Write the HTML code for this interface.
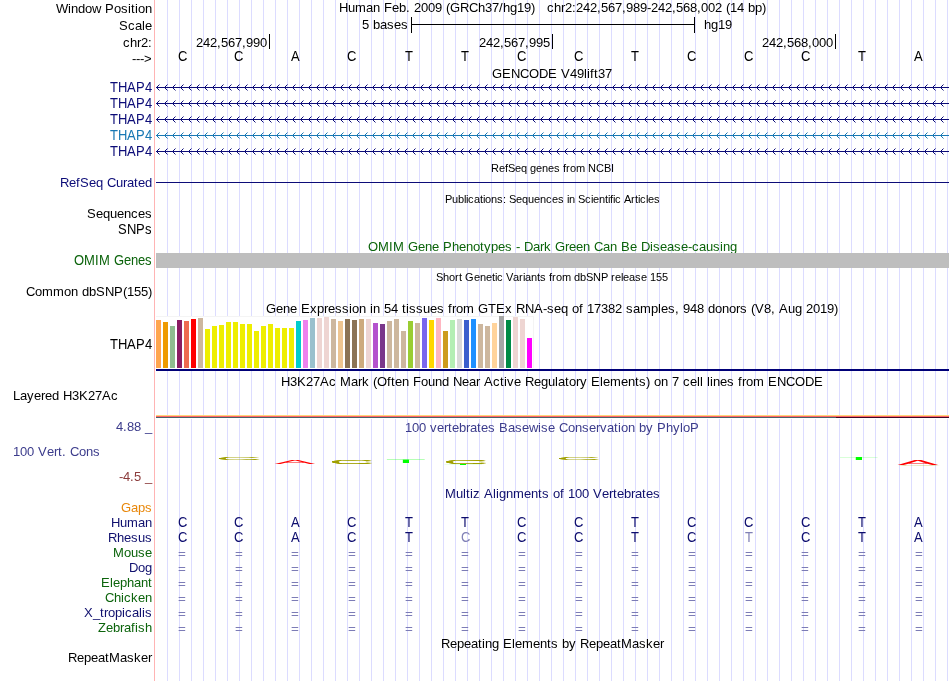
<!DOCTYPE html>
<html lang="en"><head><meta charset="utf-8"><title>UCSC Genome Browser - chr2:242,567,989-242,568,002</title>
<style>
html,body{margin:0;padding:0;background:#fff;}
body{width:950px;height:681px;overflow:hidden;}
svg{display:block;font-family:"Liberation Sans", Arial, Helvetica, sans-serif;will-change:transform;}
text{white-space:pre;}
</style></head><body>
<svg width="950" height="681" viewBox="0 0 950 681" shape-rendering="crispEdges">
<rect x="0" y="0" width="950" height="681" fill="#ffffff"/>
<g fill="#dcdcff"><rect x="167" y="0" width="1" height="681"/><rect x="179" y="0" width="1" height="681"/><rect x="191" y="0" width="1" height="681"/><rect x="203" y="0" width="1" height="681"/><rect x="215" y="0" width="1" height="681"/><rect x="227" y="0" width="1" height="681"/><rect x="239" y="0" width="1" height="681"/><rect x="251" y="0" width="1" height="681"/><rect x="263" y="0" width="1" height="681"/><rect x="275" y="0" width="1" height="681"/><rect x="287" y="0" width="1" height="681"/><rect x="299" y="0" width="1" height="681"/><rect x="311" y="0" width="1" height="681"/><rect x="323" y="0" width="1" height="681"/><rect x="335" y="0" width="1" height="681"/><rect x="347" y="0" width="1" height="681"/><rect x="359" y="0" width="1" height="681"/><rect x="371" y="0" width="1" height="681"/><rect x="383" y="0" width="1" height="681"/><rect x="395" y="0" width="1" height="681"/><rect x="407" y="0" width="1" height="681"/><rect x="419" y="0" width="1" height="681"/><rect x="431" y="0" width="1" height="681"/><rect x="443" y="0" width="1" height="681"/><rect x="455" y="0" width="1" height="681"/><rect x="467" y="0" width="1" height="681"/><rect x="479" y="0" width="1" height="681"/><rect x="491" y="0" width="1" height="681"/><rect x="503" y="0" width="1" height="681"/><rect x="515" y="0" width="1" height="681"/><rect x="527" y="0" width="1" height="681"/><rect x="539" y="0" width="1" height="681"/><rect x="551" y="0" width="1" height="681"/><rect x="563" y="0" width="1" height="681"/><rect x="575" y="0" width="1" height="681"/><rect x="587" y="0" width="1" height="681"/><rect x="599" y="0" width="1" height="681"/><rect x="611" y="0" width="1" height="681"/><rect x="623" y="0" width="1" height="681"/><rect x="635" y="0" width="1" height="681"/><rect x="647" y="0" width="1" height="681"/><rect x="659" y="0" width="1" height="681"/><rect x="671" y="0" width="1" height="681"/><rect x="683" y="0" width="1" height="681"/><rect x="695" y="0" width="1" height="681"/><rect x="707" y="0" width="1" height="681"/><rect x="719" y="0" width="1" height="681"/><rect x="731" y="0" width="1" height="681"/><rect x="743" y="0" width="1" height="681"/><rect x="755" y="0" width="1" height="681"/><rect x="767" y="0" width="1" height="681"/><rect x="779" y="0" width="1" height="681"/><rect x="791" y="0" width="1" height="681"/><rect x="803" y="0" width="1" height="681"/><rect x="815" y="0" width="1" height="681"/><rect x="827" y="0" width="1" height="681"/><rect x="839" y="0" width="1" height="681"/><rect x="851" y="0" width="1" height="681"/><rect x="863" y="0" width="1" height="681"/><rect x="875" y="0" width="1" height="681"/><rect x="887" y="0" width="1" height="681"/><rect x="899" y="0" width="1" height="681"/><rect x="911" y="0" width="1" height="681"/><rect x="923" y="0" width="1" height="681"/><rect x="935" y="0" width="1" height="681"/><rect x="947" y="0" width="1" height="681"/></g>
<rect x="154" y="0" width="1" height="681" fill="#ffb4b4"/>
<rect x="411" y="17" width="1" height="16" fill="#000000"/>
<rect x="694" y="17" width="1" height="16" fill="#000000"/>
<rect x="411" y="24" width="284" height="1" fill="#000000"/>
<rect x="269" y="34" width="1" height="15" fill="#000000"/>
<rect x="552" y="34" width="1" height="15" fill="#000000"/>
<rect x="835" y="34" width="1" height="15" fill="#000000"/>
<rect x="156" y="87" width="793" height="1" fill="#0c0c78"/>
<path d="M159.5 84.5L156.5 87.5L159.5 90.5M167.5 84.5L164.5 87.5L167.5 90.5M175.5 84.5L172.5 87.5L175.5 90.5M183.5 84.5L180.5 87.5L183.5 90.5M191.5 84.5L188.5 87.5L191.5 90.5M199.5 84.5L196.5 87.5L199.5 90.5M207.5 84.5L204.5 87.5L207.5 90.5M215.5 84.5L212.5 87.5L215.5 90.5M223.5 84.5L220.5 87.5L223.5 90.5M231.5 84.5L228.5 87.5L231.5 90.5M239.5 84.5L236.5 87.5L239.5 90.5M247.5 84.5L244.5 87.5L247.5 90.5M255.5 84.5L252.5 87.5L255.5 90.5M263.5 84.5L260.5 87.5L263.5 90.5M271.5 84.5L268.5 87.5L271.5 90.5M279.5 84.5L276.5 87.5L279.5 90.5M287.5 84.5L284.5 87.5L287.5 90.5M295.5 84.5L292.5 87.5L295.5 90.5M303.5 84.5L300.5 87.5L303.5 90.5M311.5 84.5L308.5 87.5L311.5 90.5M319.5 84.5L316.5 87.5L319.5 90.5M327.5 84.5L324.5 87.5L327.5 90.5M335.5 84.5L332.5 87.5L335.5 90.5M343.5 84.5L340.5 87.5L343.5 90.5M351.5 84.5L348.5 87.5L351.5 90.5M359.5 84.5L356.5 87.5L359.5 90.5M367.5 84.5L364.5 87.5L367.5 90.5M375.5 84.5L372.5 87.5L375.5 90.5M383.5 84.5L380.5 87.5L383.5 90.5M391.5 84.5L388.5 87.5L391.5 90.5M399.5 84.5L396.5 87.5L399.5 90.5M407.5 84.5L404.5 87.5L407.5 90.5M415.5 84.5L412.5 87.5L415.5 90.5M423.5 84.5L420.5 87.5L423.5 90.5M431.5 84.5L428.5 87.5L431.5 90.5M439.5 84.5L436.5 87.5L439.5 90.5M447.5 84.5L444.5 87.5L447.5 90.5M455.5 84.5L452.5 87.5L455.5 90.5M463.5 84.5L460.5 87.5L463.5 90.5M471.5 84.5L468.5 87.5L471.5 90.5M479.5 84.5L476.5 87.5L479.5 90.5M487.5 84.5L484.5 87.5L487.5 90.5M495.5 84.5L492.5 87.5L495.5 90.5M503.5 84.5L500.5 87.5L503.5 90.5M511.5 84.5L508.5 87.5L511.5 90.5M519.5 84.5L516.5 87.5L519.5 90.5M527.5 84.5L524.5 87.5L527.5 90.5M535.5 84.5L532.5 87.5L535.5 90.5M543.5 84.5L540.5 87.5L543.5 90.5M551.5 84.5L548.5 87.5L551.5 90.5M559.5 84.5L556.5 87.5L559.5 90.5M567.5 84.5L564.5 87.5L567.5 90.5M575.5 84.5L572.5 87.5L575.5 90.5M583.5 84.5L580.5 87.5L583.5 90.5M591.5 84.5L588.5 87.5L591.5 90.5M599.5 84.5L596.5 87.5L599.5 90.5M607.5 84.5L604.5 87.5L607.5 90.5M615.5 84.5L612.5 87.5L615.5 90.5M623.5 84.5L620.5 87.5L623.5 90.5M631.5 84.5L628.5 87.5L631.5 90.5M639.5 84.5L636.5 87.5L639.5 90.5M647.5 84.5L644.5 87.5L647.5 90.5M655.5 84.5L652.5 87.5L655.5 90.5M663.5 84.5L660.5 87.5L663.5 90.5M671.5 84.5L668.5 87.5L671.5 90.5M679.5 84.5L676.5 87.5L679.5 90.5M687.5 84.5L684.5 87.5L687.5 90.5M695.5 84.5L692.5 87.5L695.5 90.5M703.5 84.5L700.5 87.5L703.5 90.5M711.5 84.5L708.5 87.5L711.5 90.5M719.5 84.5L716.5 87.5L719.5 90.5M727.5 84.5L724.5 87.5L727.5 90.5M735.5 84.5L732.5 87.5L735.5 90.5M743.5 84.5L740.5 87.5L743.5 90.5M751.5 84.5L748.5 87.5L751.5 90.5M759.5 84.5L756.5 87.5L759.5 90.5M767.5 84.5L764.5 87.5L767.5 90.5M775.5 84.5L772.5 87.5L775.5 90.5M783.5 84.5L780.5 87.5L783.5 90.5M791.5 84.5L788.5 87.5L791.5 90.5M799.5 84.5L796.5 87.5L799.5 90.5M807.5 84.5L804.5 87.5L807.5 90.5M815.5 84.5L812.5 87.5L815.5 90.5M823.5 84.5L820.5 87.5L823.5 90.5M831.5 84.5L828.5 87.5L831.5 90.5M839.5 84.5L836.5 87.5L839.5 90.5M847.5 84.5L844.5 87.5L847.5 90.5M855.5 84.5L852.5 87.5L855.5 90.5M863.5 84.5L860.5 87.5L863.5 90.5M871.5 84.5L868.5 87.5L871.5 90.5M879.5 84.5L876.5 87.5L879.5 90.5M887.5 84.5L884.5 87.5L887.5 90.5M895.5 84.5L892.5 87.5L895.5 90.5M903.5 84.5L900.5 87.5L903.5 90.5M911.5 84.5L908.5 87.5L911.5 90.5M919.5 84.5L916.5 87.5L919.5 90.5M927.5 84.5L924.5 87.5L927.5 90.5M935.5 84.5L932.5 87.5L935.5 90.5M943.5 84.5L940.5 87.5L943.5 90.5" stroke="#0c0c78" stroke-width="1" fill="none" shape-rendering="geometricPrecision"/>
<rect x="156" y="103" width="793" height="1" fill="#0c0c78"/>
<path d="M159.5 100.5L156.5 103.5L159.5 106.5M167.5 100.5L164.5 103.5L167.5 106.5M175.5 100.5L172.5 103.5L175.5 106.5M183.5 100.5L180.5 103.5L183.5 106.5M191.5 100.5L188.5 103.5L191.5 106.5M199.5 100.5L196.5 103.5L199.5 106.5M207.5 100.5L204.5 103.5L207.5 106.5M215.5 100.5L212.5 103.5L215.5 106.5M223.5 100.5L220.5 103.5L223.5 106.5M231.5 100.5L228.5 103.5L231.5 106.5M239.5 100.5L236.5 103.5L239.5 106.5M247.5 100.5L244.5 103.5L247.5 106.5M255.5 100.5L252.5 103.5L255.5 106.5M263.5 100.5L260.5 103.5L263.5 106.5M271.5 100.5L268.5 103.5L271.5 106.5M279.5 100.5L276.5 103.5L279.5 106.5M287.5 100.5L284.5 103.5L287.5 106.5M295.5 100.5L292.5 103.5L295.5 106.5M303.5 100.5L300.5 103.5L303.5 106.5M311.5 100.5L308.5 103.5L311.5 106.5M319.5 100.5L316.5 103.5L319.5 106.5M327.5 100.5L324.5 103.5L327.5 106.5M335.5 100.5L332.5 103.5L335.5 106.5M343.5 100.5L340.5 103.5L343.5 106.5M351.5 100.5L348.5 103.5L351.5 106.5M359.5 100.5L356.5 103.5L359.5 106.5M367.5 100.5L364.5 103.5L367.5 106.5M375.5 100.5L372.5 103.5L375.5 106.5M383.5 100.5L380.5 103.5L383.5 106.5M391.5 100.5L388.5 103.5L391.5 106.5M399.5 100.5L396.5 103.5L399.5 106.5M407.5 100.5L404.5 103.5L407.5 106.5M415.5 100.5L412.5 103.5L415.5 106.5M423.5 100.5L420.5 103.5L423.5 106.5M431.5 100.5L428.5 103.5L431.5 106.5M439.5 100.5L436.5 103.5L439.5 106.5M447.5 100.5L444.5 103.5L447.5 106.5M455.5 100.5L452.5 103.5L455.5 106.5M463.5 100.5L460.5 103.5L463.5 106.5M471.5 100.5L468.5 103.5L471.5 106.5M479.5 100.5L476.5 103.5L479.5 106.5M487.5 100.5L484.5 103.5L487.5 106.5M495.5 100.5L492.5 103.5L495.5 106.5M503.5 100.5L500.5 103.5L503.5 106.5M511.5 100.5L508.5 103.5L511.5 106.5M519.5 100.5L516.5 103.5L519.5 106.5M527.5 100.5L524.5 103.5L527.5 106.5M535.5 100.5L532.5 103.5L535.5 106.5M543.5 100.5L540.5 103.5L543.5 106.5M551.5 100.5L548.5 103.5L551.5 106.5M559.5 100.5L556.5 103.5L559.5 106.5M567.5 100.5L564.5 103.5L567.5 106.5M575.5 100.5L572.5 103.5L575.5 106.5M583.5 100.5L580.5 103.5L583.5 106.5M591.5 100.5L588.5 103.5L591.5 106.5M599.5 100.5L596.5 103.5L599.5 106.5M607.5 100.5L604.5 103.5L607.5 106.5M615.5 100.5L612.5 103.5L615.5 106.5M623.5 100.5L620.5 103.5L623.5 106.5M631.5 100.5L628.5 103.5L631.5 106.5M639.5 100.5L636.5 103.5L639.5 106.5M647.5 100.5L644.5 103.5L647.5 106.5M655.5 100.5L652.5 103.5L655.5 106.5M663.5 100.5L660.5 103.5L663.5 106.5M671.5 100.5L668.5 103.5L671.5 106.5M679.5 100.5L676.5 103.5L679.5 106.5M687.5 100.5L684.5 103.5L687.5 106.5M695.5 100.5L692.5 103.5L695.5 106.5M703.5 100.5L700.5 103.5L703.5 106.5M711.5 100.5L708.5 103.5L711.5 106.5M719.5 100.5L716.5 103.5L719.5 106.5M727.5 100.5L724.5 103.5L727.5 106.5M735.5 100.5L732.5 103.5L735.5 106.5M743.5 100.5L740.5 103.5L743.5 106.5M751.5 100.5L748.5 103.5L751.5 106.5M759.5 100.5L756.5 103.5L759.5 106.5M767.5 100.5L764.5 103.5L767.5 106.5M775.5 100.5L772.5 103.5L775.5 106.5M783.5 100.5L780.5 103.5L783.5 106.5M791.5 100.5L788.5 103.5L791.5 106.5M799.5 100.5L796.5 103.5L799.5 106.5M807.5 100.5L804.5 103.5L807.5 106.5M815.5 100.5L812.5 103.5L815.5 106.5M823.5 100.5L820.5 103.5L823.5 106.5M831.5 100.5L828.5 103.5L831.5 106.5M839.5 100.5L836.5 103.5L839.5 106.5M847.5 100.5L844.5 103.5L847.5 106.5M855.5 100.5L852.5 103.5L855.5 106.5M863.5 100.5L860.5 103.5L863.5 106.5M871.5 100.5L868.5 103.5L871.5 106.5M879.5 100.5L876.5 103.5L879.5 106.5M887.5 100.5L884.5 103.5L887.5 106.5M895.5 100.5L892.5 103.5L895.5 106.5M903.5 100.5L900.5 103.5L903.5 106.5M911.5 100.5L908.5 103.5L911.5 106.5M919.5 100.5L916.5 103.5L919.5 106.5M927.5 100.5L924.5 103.5L927.5 106.5M935.5 100.5L932.5 103.5L935.5 106.5M943.5 100.5L940.5 103.5L943.5 106.5" stroke="#0c0c78" stroke-width="1" fill="none" shape-rendering="geometricPrecision"/>
<rect x="156" y="119" width="793" height="1" fill="#0c0c78"/>
<path d="M159.5 116.5L156.5 119.5L159.5 122.5M167.5 116.5L164.5 119.5L167.5 122.5M175.5 116.5L172.5 119.5L175.5 122.5M183.5 116.5L180.5 119.5L183.5 122.5M191.5 116.5L188.5 119.5L191.5 122.5M199.5 116.5L196.5 119.5L199.5 122.5M207.5 116.5L204.5 119.5L207.5 122.5M215.5 116.5L212.5 119.5L215.5 122.5M223.5 116.5L220.5 119.5L223.5 122.5M231.5 116.5L228.5 119.5L231.5 122.5M239.5 116.5L236.5 119.5L239.5 122.5M247.5 116.5L244.5 119.5L247.5 122.5M255.5 116.5L252.5 119.5L255.5 122.5M263.5 116.5L260.5 119.5L263.5 122.5M271.5 116.5L268.5 119.5L271.5 122.5M279.5 116.5L276.5 119.5L279.5 122.5M287.5 116.5L284.5 119.5L287.5 122.5M295.5 116.5L292.5 119.5L295.5 122.5M303.5 116.5L300.5 119.5L303.5 122.5M311.5 116.5L308.5 119.5L311.5 122.5M319.5 116.5L316.5 119.5L319.5 122.5M327.5 116.5L324.5 119.5L327.5 122.5M335.5 116.5L332.5 119.5L335.5 122.5M343.5 116.5L340.5 119.5L343.5 122.5M351.5 116.5L348.5 119.5L351.5 122.5M359.5 116.5L356.5 119.5L359.5 122.5M367.5 116.5L364.5 119.5L367.5 122.5M375.5 116.5L372.5 119.5L375.5 122.5M383.5 116.5L380.5 119.5L383.5 122.5M391.5 116.5L388.5 119.5L391.5 122.5M399.5 116.5L396.5 119.5L399.5 122.5M407.5 116.5L404.5 119.5L407.5 122.5M415.5 116.5L412.5 119.5L415.5 122.5M423.5 116.5L420.5 119.5L423.5 122.5M431.5 116.5L428.5 119.5L431.5 122.5M439.5 116.5L436.5 119.5L439.5 122.5M447.5 116.5L444.5 119.5L447.5 122.5M455.5 116.5L452.5 119.5L455.5 122.5M463.5 116.5L460.5 119.5L463.5 122.5M471.5 116.5L468.5 119.5L471.5 122.5M479.5 116.5L476.5 119.5L479.5 122.5M487.5 116.5L484.5 119.5L487.5 122.5M495.5 116.5L492.5 119.5L495.5 122.5M503.5 116.5L500.5 119.5L503.5 122.5M511.5 116.5L508.5 119.5L511.5 122.5M519.5 116.5L516.5 119.5L519.5 122.5M527.5 116.5L524.5 119.5L527.5 122.5M535.5 116.5L532.5 119.5L535.5 122.5M543.5 116.5L540.5 119.5L543.5 122.5M551.5 116.5L548.5 119.5L551.5 122.5M559.5 116.5L556.5 119.5L559.5 122.5M567.5 116.5L564.5 119.5L567.5 122.5M575.5 116.5L572.5 119.5L575.5 122.5M583.5 116.5L580.5 119.5L583.5 122.5M591.5 116.5L588.5 119.5L591.5 122.5M599.5 116.5L596.5 119.5L599.5 122.5M607.5 116.5L604.5 119.5L607.5 122.5M615.5 116.5L612.5 119.5L615.5 122.5M623.5 116.5L620.5 119.5L623.5 122.5M631.5 116.5L628.5 119.5L631.5 122.5M639.5 116.5L636.5 119.5L639.5 122.5M647.5 116.5L644.5 119.5L647.5 122.5M655.5 116.5L652.5 119.5L655.5 122.5M663.5 116.5L660.5 119.5L663.5 122.5M671.5 116.5L668.5 119.5L671.5 122.5M679.5 116.5L676.5 119.5L679.5 122.5M687.5 116.5L684.5 119.5L687.5 122.5M695.5 116.5L692.5 119.5L695.5 122.5M703.5 116.5L700.5 119.5L703.5 122.5M711.5 116.5L708.5 119.5L711.5 122.5M719.5 116.5L716.5 119.5L719.5 122.5M727.5 116.5L724.5 119.5L727.5 122.5M735.5 116.5L732.5 119.5L735.5 122.5M743.5 116.5L740.5 119.5L743.5 122.5M751.5 116.5L748.5 119.5L751.5 122.5M759.5 116.5L756.5 119.5L759.5 122.5M767.5 116.5L764.5 119.5L767.5 122.5M775.5 116.5L772.5 119.5L775.5 122.5M783.5 116.5L780.5 119.5L783.5 122.5M791.5 116.5L788.5 119.5L791.5 122.5M799.5 116.5L796.5 119.5L799.5 122.5M807.5 116.5L804.5 119.5L807.5 122.5M815.5 116.5L812.5 119.5L815.5 122.5M823.5 116.5L820.5 119.5L823.5 122.5M831.5 116.5L828.5 119.5L831.5 122.5M839.5 116.5L836.5 119.5L839.5 122.5M847.5 116.5L844.5 119.5L847.5 122.5M855.5 116.5L852.5 119.5L855.5 122.5M863.5 116.5L860.5 119.5L863.5 122.5M871.5 116.5L868.5 119.5L871.5 122.5M879.5 116.5L876.5 119.5L879.5 122.5M887.5 116.5L884.5 119.5L887.5 122.5M895.5 116.5L892.5 119.5L895.5 122.5M903.5 116.5L900.5 119.5L903.5 122.5M911.5 116.5L908.5 119.5L911.5 122.5M919.5 116.5L916.5 119.5L919.5 122.5M927.5 116.5L924.5 119.5L927.5 122.5M935.5 116.5L932.5 119.5L935.5 122.5M943.5 116.5L940.5 119.5L943.5 122.5" stroke="#0c0c78" stroke-width="1" fill="none" shape-rendering="geometricPrecision"/>
<rect x="156" y="135" width="793" height="1" fill="#1878b4"/>
<path d="M159.5 132.5L156.5 135.5L159.5 138.5M167.5 132.5L164.5 135.5L167.5 138.5M175.5 132.5L172.5 135.5L175.5 138.5M183.5 132.5L180.5 135.5L183.5 138.5M191.5 132.5L188.5 135.5L191.5 138.5M199.5 132.5L196.5 135.5L199.5 138.5M207.5 132.5L204.5 135.5L207.5 138.5M215.5 132.5L212.5 135.5L215.5 138.5M223.5 132.5L220.5 135.5L223.5 138.5M231.5 132.5L228.5 135.5L231.5 138.5M239.5 132.5L236.5 135.5L239.5 138.5M247.5 132.5L244.5 135.5L247.5 138.5M255.5 132.5L252.5 135.5L255.5 138.5M263.5 132.5L260.5 135.5L263.5 138.5M271.5 132.5L268.5 135.5L271.5 138.5M279.5 132.5L276.5 135.5L279.5 138.5M287.5 132.5L284.5 135.5L287.5 138.5M295.5 132.5L292.5 135.5L295.5 138.5M303.5 132.5L300.5 135.5L303.5 138.5M311.5 132.5L308.5 135.5L311.5 138.5M319.5 132.5L316.5 135.5L319.5 138.5M327.5 132.5L324.5 135.5L327.5 138.5M335.5 132.5L332.5 135.5L335.5 138.5M343.5 132.5L340.5 135.5L343.5 138.5M351.5 132.5L348.5 135.5L351.5 138.5M359.5 132.5L356.5 135.5L359.5 138.5M367.5 132.5L364.5 135.5L367.5 138.5M375.5 132.5L372.5 135.5L375.5 138.5M383.5 132.5L380.5 135.5L383.5 138.5M391.5 132.5L388.5 135.5L391.5 138.5M399.5 132.5L396.5 135.5L399.5 138.5M407.5 132.5L404.5 135.5L407.5 138.5M415.5 132.5L412.5 135.5L415.5 138.5M423.5 132.5L420.5 135.5L423.5 138.5M431.5 132.5L428.5 135.5L431.5 138.5M439.5 132.5L436.5 135.5L439.5 138.5M447.5 132.5L444.5 135.5L447.5 138.5M455.5 132.5L452.5 135.5L455.5 138.5M463.5 132.5L460.5 135.5L463.5 138.5M471.5 132.5L468.5 135.5L471.5 138.5M479.5 132.5L476.5 135.5L479.5 138.5M487.5 132.5L484.5 135.5L487.5 138.5M495.5 132.5L492.5 135.5L495.5 138.5M503.5 132.5L500.5 135.5L503.5 138.5M511.5 132.5L508.5 135.5L511.5 138.5M519.5 132.5L516.5 135.5L519.5 138.5M527.5 132.5L524.5 135.5L527.5 138.5M535.5 132.5L532.5 135.5L535.5 138.5M543.5 132.5L540.5 135.5L543.5 138.5M551.5 132.5L548.5 135.5L551.5 138.5M559.5 132.5L556.5 135.5L559.5 138.5M567.5 132.5L564.5 135.5L567.5 138.5M575.5 132.5L572.5 135.5L575.5 138.5M583.5 132.5L580.5 135.5L583.5 138.5M591.5 132.5L588.5 135.5L591.5 138.5M599.5 132.5L596.5 135.5L599.5 138.5M607.5 132.5L604.5 135.5L607.5 138.5M615.5 132.5L612.5 135.5L615.5 138.5M623.5 132.5L620.5 135.5L623.5 138.5M631.5 132.5L628.5 135.5L631.5 138.5M639.5 132.5L636.5 135.5L639.5 138.5M647.5 132.5L644.5 135.5L647.5 138.5M655.5 132.5L652.5 135.5L655.5 138.5M663.5 132.5L660.5 135.5L663.5 138.5M671.5 132.5L668.5 135.5L671.5 138.5M679.5 132.5L676.5 135.5L679.5 138.5M687.5 132.5L684.5 135.5L687.5 138.5M695.5 132.5L692.5 135.5L695.5 138.5M703.5 132.5L700.5 135.5L703.5 138.5M711.5 132.5L708.5 135.5L711.5 138.5M719.5 132.5L716.5 135.5L719.5 138.5M727.5 132.5L724.5 135.5L727.5 138.5M735.5 132.5L732.5 135.5L735.5 138.5M743.5 132.5L740.5 135.5L743.5 138.5M751.5 132.5L748.5 135.5L751.5 138.5M759.5 132.5L756.5 135.5L759.5 138.5M767.5 132.5L764.5 135.5L767.5 138.5M775.5 132.5L772.5 135.5L775.5 138.5M783.5 132.5L780.5 135.5L783.5 138.5M791.5 132.5L788.5 135.5L791.5 138.5M799.5 132.5L796.5 135.5L799.5 138.5M807.5 132.5L804.5 135.5L807.5 138.5M815.5 132.5L812.5 135.5L815.5 138.5M823.5 132.5L820.5 135.5L823.5 138.5M831.5 132.5L828.5 135.5L831.5 138.5M839.5 132.5L836.5 135.5L839.5 138.5M847.5 132.5L844.5 135.5L847.5 138.5M855.5 132.5L852.5 135.5L855.5 138.5M863.5 132.5L860.5 135.5L863.5 138.5M871.5 132.5L868.5 135.5L871.5 138.5M879.5 132.5L876.5 135.5L879.5 138.5M887.5 132.5L884.5 135.5L887.5 138.5M895.5 132.5L892.5 135.5L895.5 138.5M903.5 132.5L900.5 135.5L903.5 138.5M911.5 132.5L908.5 135.5L911.5 138.5M919.5 132.5L916.5 135.5L919.5 138.5M927.5 132.5L924.5 135.5L927.5 138.5M935.5 132.5L932.5 135.5L935.5 138.5M943.5 132.5L940.5 135.5L943.5 138.5" stroke="#1878b4" stroke-width="1" fill="none" shape-rendering="geometricPrecision"/>
<rect x="156" y="151" width="793" height="1" fill="#0c0c78"/>
<path d="M159.5 148.5L156.5 151.5L159.5 154.5M167.5 148.5L164.5 151.5L167.5 154.5M175.5 148.5L172.5 151.5L175.5 154.5M183.5 148.5L180.5 151.5L183.5 154.5M191.5 148.5L188.5 151.5L191.5 154.5M199.5 148.5L196.5 151.5L199.5 154.5M207.5 148.5L204.5 151.5L207.5 154.5M215.5 148.5L212.5 151.5L215.5 154.5M223.5 148.5L220.5 151.5L223.5 154.5M231.5 148.5L228.5 151.5L231.5 154.5M239.5 148.5L236.5 151.5L239.5 154.5M247.5 148.5L244.5 151.5L247.5 154.5M255.5 148.5L252.5 151.5L255.5 154.5M263.5 148.5L260.5 151.5L263.5 154.5M271.5 148.5L268.5 151.5L271.5 154.5M279.5 148.5L276.5 151.5L279.5 154.5M287.5 148.5L284.5 151.5L287.5 154.5M295.5 148.5L292.5 151.5L295.5 154.5M303.5 148.5L300.5 151.5L303.5 154.5M311.5 148.5L308.5 151.5L311.5 154.5M319.5 148.5L316.5 151.5L319.5 154.5M327.5 148.5L324.5 151.5L327.5 154.5M335.5 148.5L332.5 151.5L335.5 154.5M343.5 148.5L340.5 151.5L343.5 154.5M351.5 148.5L348.5 151.5L351.5 154.5M359.5 148.5L356.5 151.5L359.5 154.5M367.5 148.5L364.5 151.5L367.5 154.5M375.5 148.5L372.5 151.5L375.5 154.5M383.5 148.5L380.5 151.5L383.5 154.5M391.5 148.5L388.5 151.5L391.5 154.5M399.5 148.5L396.5 151.5L399.5 154.5M407.5 148.5L404.5 151.5L407.5 154.5M415.5 148.5L412.5 151.5L415.5 154.5M423.5 148.5L420.5 151.5L423.5 154.5M431.5 148.5L428.5 151.5L431.5 154.5M439.5 148.5L436.5 151.5L439.5 154.5M447.5 148.5L444.5 151.5L447.5 154.5M455.5 148.5L452.5 151.5L455.5 154.5M463.5 148.5L460.5 151.5L463.5 154.5M471.5 148.5L468.5 151.5L471.5 154.5M479.5 148.5L476.5 151.5L479.5 154.5M487.5 148.5L484.5 151.5L487.5 154.5M495.5 148.5L492.5 151.5L495.5 154.5M503.5 148.5L500.5 151.5L503.5 154.5M511.5 148.5L508.5 151.5L511.5 154.5M519.5 148.5L516.5 151.5L519.5 154.5M527.5 148.5L524.5 151.5L527.5 154.5M535.5 148.5L532.5 151.5L535.5 154.5M543.5 148.5L540.5 151.5L543.5 154.5M551.5 148.5L548.5 151.5L551.5 154.5M559.5 148.5L556.5 151.5L559.5 154.5M567.5 148.5L564.5 151.5L567.5 154.5M575.5 148.5L572.5 151.5L575.5 154.5M583.5 148.5L580.5 151.5L583.5 154.5M591.5 148.5L588.5 151.5L591.5 154.5M599.5 148.5L596.5 151.5L599.5 154.5M607.5 148.5L604.5 151.5L607.5 154.5M615.5 148.5L612.5 151.5L615.5 154.5M623.5 148.5L620.5 151.5L623.5 154.5M631.5 148.5L628.5 151.5L631.5 154.5M639.5 148.5L636.5 151.5L639.5 154.5M647.5 148.5L644.5 151.5L647.5 154.5M655.5 148.5L652.5 151.5L655.5 154.5M663.5 148.5L660.5 151.5L663.5 154.5M671.5 148.5L668.5 151.5L671.5 154.5M679.5 148.5L676.5 151.5L679.5 154.5M687.5 148.5L684.5 151.5L687.5 154.5M695.5 148.5L692.5 151.5L695.5 154.5M703.5 148.5L700.5 151.5L703.5 154.5M711.5 148.5L708.5 151.5L711.5 154.5M719.5 148.5L716.5 151.5L719.5 154.5M727.5 148.5L724.5 151.5L727.5 154.5M735.5 148.5L732.5 151.5L735.5 154.5M743.5 148.5L740.5 151.5L743.5 154.5M751.5 148.5L748.5 151.5L751.5 154.5M759.5 148.5L756.5 151.5L759.5 154.5M767.5 148.5L764.5 151.5L767.5 154.5M775.5 148.5L772.5 151.5L775.5 154.5M783.5 148.5L780.5 151.5L783.5 154.5M791.5 148.5L788.5 151.5L791.5 154.5M799.5 148.5L796.5 151.5L799.5 154.5M807.5 148.5L804.5 151.5L807.5 154.5M815.5 148.5L812.5 151.5L815.5 154.5M823.5 148.5L820.5 151.5L823.5 154.5M831.5 148.5L828.5 151.5L831.5 154.5M839.5 148.5L836.5 151.5L839.5 154.5M847.5 148.5L844.5 151.5L847.5 154.5M855.5 148.5L852.5 151.5L855.5 154.5M863.5 148.5L860.5 151.5L863.5 154.5M871.5 148.5L868.5 151.5L871.5 154.5M879.5 148.5L876.5 151.5L879.5 154.5M887.5 148.5L884.5 151.5L887.5 154.5M895.5 148.5L892.5 151.5L895.5 154.5M903.5 148.5L900.5 151.5L903.5 154.5M911.5 148.5L908.5 151.5L911.5 154.5M919.5 148.5L916.5 151.5L919.5 154.5M927.5 148.5L924.5 151.5L927.5 154.5M935.5 148.5L932.5 151.5L935.5 154.5M943.5 148.5L940.5 151.5L943.5 154.5" stroke="#0c0c78" stroke-width="1" fill="none" shape-rendering="geometricPrecision"/>
<rect x="156" y="182" width="793" height="1" fill="#0c0c78"/>
<rect x="156" y="415" width="793" height="1" fill="#ffd67a"/>
<rect x="156" y="416" width="793" height="1" fill="#ff6464"/>
<rect x="156" y="417" width="680" height="1" fill="#46646a"/>
<rect x="836" y="417" width="113" height="1" fill="#3c0a28"/>
<rect x="156" y="418" width="793" height="1" fill="#ffffff"/>
<text x="56 68 71 78 85 92 101 105 114 121 128 131 135 138 145" y="13" font-size="13">Window Position</text>
<text x="119 128 135 142 145" y="30" font-size="13">Scale</text>
<text x="123 130 137 141 148" y="47" font-size="13">chr2:</text>
<text x="132 136 140 144" y="63" font-size="13">---&gt;</text>
<text x="339 348 355 366 373 380 384 392 399 406 410 414 421 428 435 442 446 450 460 469 478 485 492 499 503 510 517 524 531 535 539 543 547 554 561 565 572 576 583 590 597 601 608 615 622 626 633 640 647 651 658 665 672 676 683 690 697 701 708 715 722 726 730 737 744 748 755 762" y="12" font-size="13">Human Feb. 2009 (GRCh37/hg19)   chr2:242,567,989-242,568,002 (14 bp)</text>
<text x="362 369 373 380 387 394 401" y="29" font-size="13">5 bases</text>
<text x="704 711 718 725" y="29" font-size="13">hg19</text>
<text x="196 203 210 217 221 228 235 242 246 253 260" y="47" font-size="13">242,567,990</text>
<text x="479 486 493 500 504 511 518 525 529 536 543" y="47" font-size="13">242,567,995</text>
<text x="762 769 776 783 787 794 801 808 812 819 826" y="47" font-size="13">242,568,000</text>
<text transform="matrix(1 0 0 1.07 0 61)" x="178.1" y="0" font-size="13">C</text>
<text transform="matrix(1 0 0 1.07 0 61)" x="234.1" y="0" font-size="13">C</text>
<text transform="matrix(1 0 0 1.07 0 61)" x="291" y="0" font-size="13">A</text>
<text transform="matrix(1 0 0 1.07 0 61)" x="347.1" y="0" font-size="13">C</text>
<text transform="matrix(1 0 0 1.07 0 61)" x="405" y="0" font-size="13">T</text>
<text transform="matrix(1 0 0 1.07 0 61)" x="461" y="0" font-size="13">T</text>
<text transform="matrix(1 0 0 1.07 0 61)" x="517.1" y="0" font-size="13">C</text>
<text transform="matrix(1 0 0 1.07 0 61)" x="574.1" y="0" font-size="13">C</text>
<text transform="matrix(1 0 0 1.07 0 61)" x="631" y="0" font-size="13">T</text>
<text transform="matrix(1 0 0 1.07 0 61)" x="687.1" y="0" font-size="13">C</text>
<text transform="matrix(1 0 0 1.07 0 61)" x="744.1" y="0" font-size="13">C</text>
<text transform="matrix(1 0 0 1.07 0 61)" x="801.1" y="0" font-size="13">C</text>
<text transform="matrix(1 0 0 1.07 0 61)" x="858" y="0" font-size="13">T</text>
<text transform="matrix(1 0 0 1.07 0 61)" x="914" y="0" font-size="13">A</text>
<text x="492 502 511 520 529 539 548 557 561 570 577 584 587 590 594 598 605" y="78" font-size="13">GENCODE V49lift37</text>
<text transform="matrix(1 0 0 1.07 0 92)" x="110 118 127 136 145" y="0" font-size="13" fill="#0c0c78">THAP4</text>
<text transform="matrix(1 0 0 1.07 0 108)" x="110 118 127 136 145" y="0" font-size="13" fill="#0c0c78">THAP4</text>
<text transform="matrix(1 0 0 1.07 0 124)" x="110 118 127 136 145" y="0" font-size="13" fill="#0c0c78">THAP4</text>
<text transform="matrix(1 0 0 1.07 0 140)" x="110 118 127 136 145" y="0" font-size="13" fill="#1878b4">THAP4</text>
<text transform="matrix(1 0 0 1.07 0 156)" x="110 118 127 136 145" y="0" font-size="13" fill="#0c0c78">THAP4</text>
<text x="491 499 505 508 515 521 527 530 536 542 548 554 560 563 566 570 576 585 588 596 604 611" y="172" font-size="11">RefSeq genes from NCBI</text>
<text x="60 69 76 80 89 96 103 107 116 123 127 134 138 145" y="187" font-size="13" fill="#0c0c78">RefSeq Curated</text>
<text x="445 452 458 464 466 468 474 480 483 485 491 497 503 506 509 516 522 528 534 540 546 552 558 564 567 569 575 578 585 591 593 599 605 608 610 613 615 621 624 631 635 638 640 646 648 654" y="203" font-size="11">Publications: Sequences in Scientific Articles</text>
<text x="87 96 103 110 117 124 131 138 145" y="218" font-size="13">Sequences</text>
<text transform="matrix(1 0 0 1.07 0 234)" x="118 127 136 145" y="0" font-size="13">SNPs</text>
<text x="368 378 389 393 404 408 418 425 432 439 443 452 459 466 473 480 484 491 498 505 512 516 520 524 533 540 544 551 555 565 569 576 583 590 594 603 610 617 621 630 637 641 650 653 660 667 674 681 688 692 699 706 713 720 723 730" y="251" font-size="13" fill="#0c640c">OMIM Gene Phenotypes - Dark Green Can Be Disease-causing</text>
<text transform="matrix(1 0 0 1.07 0 265)" x="74 84 95 99 110 114 124 131 138 145" y="0" font-size="13" fill="#0c640c">OMIM Genes</text>
<text x="436 443 449 455 459 462 465 474 480 486 492 495 497 503 506 513 519 523 525 531 537 540 546 549 552 556 562 571 574 580 586 593 601 608 611 615 621 623 629 635 641 647 650 656 662" y="281" font-size="11">Short Genetic Variants from dbSNP release 155</text>
<text x="26 35 42 53 64 71 78 82 89 96 105 114 123 127 134 141 148" y="296" font-size="13">Common dbSNP(155)</text>
<text x="266 276 283 290 297 301 310 317 324 328 335 342 349 352 359 366 370 373 380 384 391 398 402 406 409 416 423 430 437 444 448 452 456 463 474 478 488 496 505 512 516 525 534 543 547 554 561 568 572 579 583 587 594 601 608 615 622 626 633 640 651 658 661 668 675 679 683 690 697 704 708 715 722 729 736 740 747 751 755 764 771 775 779 788 795 802 806 813 820 827 834" y="313" font-size="13">Gene Expression in 54 tissues from GTEx RNA-seq of 17382 samples, 948 donors (V8, Aug 2019)</text>
<text transform="matrix(1 0 0 1.07 0 349)" x="110 118 127 136 145" y="0" font-size="13">THAP4</text>
<text x="281 290 297 306 313 320 329 336 340 351 358 362 369 373 377 387 391 395 402 409 413 421 428 435 442 449 453 462 469 476 480 484 493 500 504 507 514 521 525 534 541 548 555 558 565 569 576 580 587 591 600 603 610 621 628 635 639 646 650 654 661 668 672 679 683 690 697 700 703 707 710 713 720 727 734 738 742 746 753 764 768 777 786 795 805 814" y="386" font-size="13">H3K27Ac Mark (Often Found Near Active Regulatory Elements) on 7 cell lines from ENCODE</text>
<text x="13 20 27 34 41 45 52 59 63 72 79 88 95 102 111" y="400" font-size="13">Layered H3K27Ac</text>
<text x="405 412 419 426 430 437 444 448 452 459 466 470 477 481 488 495 499 508 515 522 529 538 541 548 555 559 568 575 582 589 596 600 607 614 618 621 628 635 639 646 653 657 666 673 680 683 690" y="432" font-size="13" fill="#3c3c8c">100 vertebrates Basewise Conservation by PhyloP</text>
<text x="116 123 127 134 141 145" y="431" font-size="13" fill="#3c3c8c">4.88 _</text>
<text x="13 20 27 34 38 47 54 58 62 66 70 79 86 93" y="456" font-size="13" fill="#3c3c8c">100 Vert. Cons</text>
<text x="119 123 130 134 141 145" y="481" font-size="13" fill="#8c3c3c">-4.5 _</text>
<text x="445 456 463 466 470 473 480 484 493 496 499 506 513 524 531 538 542 549 553 560 564 568 575 582 589 593 602 609 613 617 624 631 635 642 646 653" y="498" font-size="13" fill="#10106e">Multiz Alignments of 100 Vertebrates</text>
<text x="121 131 138 145" y="512" font-size="13" fill="#e8870a">Gaps</text>
<text x="111 120 127 138 145" y="527" font-size="13" fill="#10106e">Human</text>
<text transform="matrix(1 0 0 1.07 0 527)" x="178.1" y="0" font-size="13" fill="#0c0c6e">C</text>
<text transform="matrix(1 0 0 1.07 0 527)" x="234.1" y="0" font-size="13" fill="#0c0c6e">C</text>
<text transform="matrix(1 0 0 1.07 0 527)" x="291" y="0" font-size="13" fill="#0c0c6e">A</text>
<text transform="matrix(1 0 0 1.07 0 527)" x="347.1" y="0" font-size="13" fill="#0c0c6e">C</text>
<text transform="matrix(1 0 0 1.07 0 527)" x="405" y="0" font-size="13" fill="#0c0c6e">T</text>
<text transform="matrix(1 0 0 1.07 0 527)" x="461" y="0" font-size="13" fill="#0c0c6e">T</text>
<text transform="matrix(1 0 0 1.07 0 527)" x="517.1" y="0" font-size="13" fill="#0c0c6e">C</text>
<text transform="matrix(1 0 0 1.07 0 527)" x="574.1" y="0" font-size="13" fill="#0c0c6e">C</text>
<text transform="matrix(1 0 0 1.07 0 527)" x="631" y="0" font-size="13" fill="#0c0c6e">T</text>
<text transform="matrix(1 0 0 1.07 0 527)" x="687.1" y="0" font-size="13" fill="#0c0c6e">C</text>
<text transform="matrix(1 0 0 1.07 0 527)" x="744.1" y="0" font-size="13" fill="#0c0c6e">C</text>
<text transform="matrix(1 0 0 1.07 0 527)" x="801.1" y="0" font-size="13" fill="#0c0c6e">C</text>
<text transform="matrix(1 0 0 1.07 0 527)" x="858" y="0" font-size="13" fill="#0c0c6e">T</text>
<text transform="matrix(1 0 0 1.07 0 527)" x="914" y="0" font-size="13" fill="#0c0c6e">A</text>
<text x="108 117 124 131 138 145" y="542" font-size="13" fill="#10106e">Rhesus</text>
<text transform="matrix(1 0 0 1.07 0 542)" x="178.1" y="0" font-size="13" fill="#0c0c6e">C</text>
<text transform="matrix(1 0 0 1.07 0 542)" x="234.1" y="0" font-size="13" fill="#0c0c6e">C</text>
<text transform="matrix(1 0 0 1.07 0 542)" x="291" y="0" font-size="13" fill="#0c0c6e">A</text>
<text transform="matrix(1 0 0 1.07 0 542)" x="347.1" y="0" font-size="13" fill="#0c0c6e">C</text>
<text transform="matrix(1 0 0 1.07 0 542)" x="405" y="0" font-size="13" fill="#0c0c6e">T</text>
<text transform="matrix(1 0 0 1.07 0 542)" x="461.1" y="0" font-size="13" fill="#8080b6">C</text>
<text transform="matrix(1 0 0 1.07 0 542)" x="517.1" y="0" font-size="13" fill="#0c0c6e">C</text>
<text transform="matrix(1 0 0 1.07 0 542)" x="574.1" y="0" font-size="13" fill="#0c0c6e">C</text>
<text transform="matrix(1 0 0 1.07 0 542)" x="631" y="0" font-size="13" fill="#0c0c6e">T</text>
<text transform="matrix(1 0 0 1.07 0 542)" x="687.1" y="0" font-size="13" fill="#0c0c6e">C</text>
<text transform="matrix(1 0 0 1.07 0 542)" x="745" y="0" font-size="13" fill="#8080b6">T</text>
<text transform="matrix(1 0 0 1.07 0 542)" x="801.1" y="0" font-size="13" fill="#0c0c6e">C</text>
<text transform="matrix(1 0 0 1.07 0 542)" x="858" y="0" font-size="13" fill="#0c0c6e">T</text>
<text transform="matrix(1 0 0 1.07 0 542)" x="914" y="0" font-size="13" fill="#0c0c6e">A</text>
<text x="113 124 131 138 145" y="557" font-size="13" fill="#0c640c">Mouse</text>
<text x="181.8" y="558" font-size="12.1" text-anchor="middle" textLength="7.85" lengthAdjust="spacingAndGlyphs" fill="#7c7cb6">=</text>
<text x="238.8" y="558" font-size="12.1" text-anchor="middle" textLength="7.85" lengthAdjust="spacingAndGlyphs" fill="#7c7cb6">=</text>
<text x="294.8" y="558" font-size="12.1" text-anchor="middle" textLength="7.85" lengthAdjust="spacingAndGlyphs" fill="#7c7cb6">=</text>
<text x="351.8" y="558" font-size="12.1" text-anchor="middle" textLength="7.85" lengthAdjust="spacingAndGlyphs" fill="#7c7cb6">=</text>
<text x="408.8" y="558" font-size="12.1" text-anchor="middle" textLength="7.85" lengthAdjust="spacingAndGlyphs" fill="#7c7cb6">=</text>
<text x="464.8" y="558" font-size="12.1" text-anchor="middle" textLength="7.85" lengthAdjust="spacingAndGlyphs" fill="#7c7cb6">=</text>
<text x="521.8" y="558" font-size="12.1" text-anchor="middle" textLength="7.85" lengthAdjust="spacingAndGlyphs" fill="#7c7cb6">=</text>
<text x="578.8" y="558" font-size="12.1" text-anchor="middle" textLength="7.85" lengthAdjust="spacingAndGlyphs" fill="#7c7cb6">=</text>
<text x="634.8" y="558" font-size="12.1" text-anchor="middle" textLength="7.85" lengthAdjust="spacingAndGlyphs" fill="#7c7cb6">=</text>
<text x="691.8" y="558" font-size="12.1" text-anchor="middle" textLength="7.85" lengthAdjust="spacingAndGlyphs" fill="#7c7cb6">=</text>
<text x="748.8" y="558" font-size="12.1" text-anchor="middle" textLength="7.85" lengthAdjust="spacingAndGlyphs" fill="#7c7cb6">=</text>
<text x="804.8" y="558" font-size="12.1" text-anchor="middle" textLength="7.85" lengthAdjust="spacingAndGlyphs" fill="#7c7cb6">=</text>
<text x="861.8" y="558" font-size="12.1" text-anchor="middle" textLength="7.85" lengthAdjust="spacingAndGlyphs" fill="#7c7cb6">=</text>
<text x="918.8" y="558" font-size="12.1" text-anchor="middle" textLength="7.85" lengthAdjust="spacingAndGlyphs" fill="#7c7cb6">=</text>
<text x="129 138 145" y="572" font-size="13" fill="#10106e">Dog</text>
<text x="181.8" y="573" font-size="12.1" text-anchor="middle" textLength="7.85" lengthAdjust="spacingAndGlyphs" fill="#7c7cb6">=</text>
<text x="238.8" y="573" font-size="12.1" text-anchor="middle" textLength="7.85" lengthAdjust="spacingAndGlyphs" fill="#7c7cb6">=</text>
<text x="294.8" y="573" font-size="12.1" text-anchor="middle" textLength="7.85" lengthAdjust="spacingAndGlyphs" fill="#7c7cb6">=</text>
<text x="351.8" y="573" font-size="12.1" text-anchor="middle" textLength="7.85" lengthAdjust="spacingAndGlyphs" fill="#7c7cb6">=</text>
<text x="408.8" y="573" font-size="12.1" text-anchor="middle" textLength="7.85" lengthAdjust="spacingAndGlyphs" fill="#7c7cb6">=</text>
<text x="464.8" y="573" font-size="12.1" text-anchor="middle" textLength="7.85" lengthAdjust="spacingAndGlyphs" fill="#7c7cb6">=</text>
<text x="521.8" y="573" font-size="12.1" text-anchor="middle" textLength="7.85" lengthAdjust="spacingAndGlyphs" fill="#7c7cb6">=</text>
<text x="578.8" y="573" font-size="12.1" text-anchor="middle" textLength="7.85" lengthAdjust="spacingAndGlyphs" fill="#7c7cb6">=</text>
<text x="634.8" y="573" font-size="12.1" text-anchor="middle" textLength="7.85" lengthAdjust="spacingAndGlyphs" fill="#7c7cb6">=</text>
<text x="691.8" y="573" font-size="12.1" text-anchor="middle" textLength="7.85" lengthAdjust="spacingAndGlyphs" fill="#7c7cb6">=</text>
<text x="748.8" y="573" font-size="12.1" text-anchor="middle" textLength="7.85" lengthAdjust="spacingAndGlyphs" fill="#7c7cb6">=</text>
<text x="804.8" y="573" font-size="12.1" text-anchor="middle" textLength="7.85" lengthAdjust="spacingAndGlyphs" fill="#7c7cb6">=</text>
<text x="861.8" y="573" font-size="12.1" text-anchor="middle" textLength="7.85" lengthAdjust="spacingAndGlyphs" fill="#7c7cb6">=</text>
<text x="918.8" y="573" font-size="12.1" text-anchor="middle" textLength="7.85" lengthAdjust="spacingAndGlyphs" fill="#7c7cb6">=</text>
<text x="101 110 113 120 127 134 141 148" y="587" font-size="13" fill="#0c640c">Elephant</text>
<text x="181.8" y="588" font-size="12.1" text-anchor="middle" textLength="7.85" lengthAdjust="spacingAndGlyphs" fill="#7c7cb6">=</text>
<text x="238.8" y="588" font-size="12.1" text-anchor="middle" textLength="7.85" lengthAdjust="spacingAndGlyphs" fill="#7c7cb6">=</text>
<text x="294.8" y="588" font-size="12.1" text-anchor="middle" textLength="7.85" lengthAdjust="spacingAndGlyphs" fill="#7c7cb6">=</text>
<text x="351.8" y="588" font-size="12.1" text-anchor="middle" textLength="7.85" lengthAdjust="spacingAndGlyphs" fill="#7c7cb6">=</text>
<text x="408.8" y="588" font-size="12.1" text-anchor="middle" textLength="7.85" lengthAdjust="spacingAndGlyphs" fill="#7c7cb6">=</text>
<text x="464.8" y="588" font-size="12.1" text-anchor="middle" textLength="7.85" lengthAdjust="spacingAndGlyphs" fill="#7c7cb6">=</text>
<text x="521.8" y="588" font-size="12.1" text-anchor="middle" textLength="7.85" lengthAdjust="spacingAndGlyphs" fill="#7c7cb6">=</text>
<text x="578.8" y="588" font-size="12.1" text-anchor="middle" textLength="7.85" lengthAdjust="spacingAndGlyphs" fill="#7c7cb6">=</text>
<text x="634.8" y="588" font-size="12.1" text-anchor="middle" textLength="7.85" lengthAdjust="spacingAndGlyphs" fill="#7c7cb6">=</text>
<text x="691.8" y="588" font-size="12.1" text-anchor="middle" textLength="7.85" lengthAdjust="spacingAndGlyphs" fill="#7c7cb6">=</text>
<text x="748.8" y="588" font-size="12.1" text-anchor="middle" textLength="7.85" lengthAdjust="spacingAndGlyphs" fill="#7c7cb6">=</text>
<text x="804.8" y="588" font-size="12.1" text-anchor="middle" textLength="7.85" lengthAdjust="spacingAndGlyphs" fill="#7c7cb6">=</text>
<text x="861.8" y="588" font-size="12.1" text-anchor="middle" textLength="7.85" lengthAdjust="spacingAndGlyphs" fill="#7c7cb6">=</text>
<text x="918.8" y="588" font-size="12.1" text-anchor="middle" textLength="7.85" lengthAdjust="spacingAndGlyphs" fill="#7c7cb6">=</text>
<text x="105 114 121 124 131 138 145" y="602" font-size="13" fill="#0c640c">Chicken</text>
<text x="181.8" y="603" font-size="12.1" text-anchor="middle" textLength="7.85" lengthAdjust="spacingAndGlyphs" fill="#7c7cb6">=</text>
<text x="238.8" y="603" font-size="12.1" text-anchor="middle" textLength="7.85" lengthAdjust="spacingAndGlyphs" fill="#7c7cb6">=</text>
<text x="294.8" y="603" font-size="12.1" text-anchor="middle" textLength="7.85" lengthAdjust="spacingAndGlyphs" fill="#7c7cb6">=</text>
<text x="351.8" y="603" font-size="12.1" text-anchor="middle" textLength="7.85" lengthAdjust="spacingAndGlyphs" fill="#7c7cb6">=</text>
<text x="408.8" y="603" font-size="12.1" text-anchor="middle" textLength="7.85" lengthAdjust="spacingAndGlyphs" fill="#7c7cb6">=</text>
<text x="464.8" y="603" font-size="12.1" text-anchor="middle" textLength="7.85" lengthAdjust="spacingAndGlyphs" fill="#7c7cb6">=</text>
<text x="521.8" y="603" font-size="12.1" text-anchor="middle" textLength="7.85" lengthAdjust="spacingAndGlyphs" fill="#7c7cb6">=</text>
<text x="578.8" y="603" font-size="12.1" text-anchor="middle" textLength="7.85" lengthAdjust="spacingAndGlyphs" fill="#7c7cb6">=</text>
<text x="634.8" y="603" font-size="12.1" text-anchor="middle" textLength="7.85" lengthAdjust="spacingAndGlyphs" fill="#7c7cb6">=</text>
<text x="691.8" y="603" font-size="12.1" text-anchor="middle" textLength="7.85" lengthAdjust="spacingAndGlyphs" fill="#7c7cb6">=</text>
<text x="748.8" y="603" font-size="12.1" text-anchor="middle" textLength="7.85" lengthAdjust="spacingAndGlyphs" fill="#7c7cb6">=</text>
<text x="804.8" y="603" font-size="12.1" text-anchor="middle" textLength="7.85" lengthAdjust="spacingAndGlyphs" fill="#7c7cb6">=</text>
<text x="861.8" y="603" font-size="12.1" text-anchor="middle" textLength="7.85" lengthAdjust="spacingAndGlyphs" fill="#7c7cb6">=</text>
<text x="918.8" y="603" font-size="12.1" text-anchor="middle" textLength="7.85" lengthAdjust="spacingAndGlyphs" fill="#7c7cb6">=</text>
<text x="84 93 100 104 108 115 122 125 132 139 142 145" y="617" font-size="13" fill="#10106e">X_tropicalis</text>
<text x="181.8" y="618" font-size="12.1" text-anchor="middle" textLength="7.85" lengthAdjust="spacingAndGlyphs" fill="#7c7cb6">=</text>
<text x="238.8" y="618" font-size="12.1" text-anchor="middle" textLength="7.85" lengthAdjust="spacingAndGlyphs" fill="#7c7cb6">=</text>
<text x="294.8" y="618" font-size="12.1" text-anchor="middle" textLength="7.85" lengthAdjust="spacingAndGlyphs" fill="#7c7cb6">=</text>
<text x="351.8" y="618" font-size="12.1" text-anchor="middle" textLength="7.85" lengthAdjust="spacingAndGlyphs" fill="#7c7cb6">=</text>
<text x="408.8" y="618" font-size="12.1" text-anchor="middle" textLength="7.85" lengthAdjust="spacingAndGlyphs" fill="#7c7cb6">=</text>
<text x="464.8" y="618" font-size="12.1" text-anchor="middle" textLength="7.85" lengthAdjust="spacingAndGlyphs" fill="#7c7cb6">=</text>
<text x="521.8" y="618" font-size="12.1" text-anchor="middle" textLength="7.85" lengthAdjust="spacingAndGlyphs" fill="#7c7cb6">=</text>
<text x="578.8" y="618" font-size="12.1" text-anchor="middle" textLength="7.85" lengthAdjust="spacingAndGlyphs" fill="#7c7cb6">=</text>
<text x="634.8" y="618" font-size="12.1" text-anchor="middle" textLength="7.85" lengthAdjust="spacingAndGlyphs" fill="#7c7cb6">=</text>
<text x="691.8" y="618" font-size="12.1" text-anchor="middle" textLength="7.85" lengthAdjust="spacingAndGlyphs" fill="#7c7cb6">=</text>
<text x="748.8" y="618" font-size="12.1" text-anchor="middle" textLength="7.85" lengthAdjust="spacingAndGlyphs" fill="#7c7cb6">=</text>
<text x="804.8" y="618" font-size="12.1" text-anchor="middle" textLength="7.85" lengthAdjust="spacingAndGlyphs" fill="#7c7cb6">=</text>
<text x="861.8" y="618" font-size="12.1" text-anchor="middle" textLength="7.85" lengthAdjust="spacingAndGlyphs" fill="#7c7cb6">=</text>
<text x="918.8" y="618" font-size="12.1" text-anchor="middle" textLength="7.85" lengthAdjust="spacingAndGlyphs" fill="#7c7cb6">=</text>
<text x="98 106 113 120 124 131 135 138 145" y="632" font-size="13" fill="#0c640c">Zebrafish</text>
<text x="181.8" y="633" font-size="12.1" text-anchor="middle" textLength="7.85" lengthAdjust="spacingAndGlyphs" fill="#7c7cb6">=</text>
<text x="238.8" y="633" font-size="12.1" text-anchor="middle" textLength="7.85" lengthAdjust="spacingAndGlyphs" fill="#7c7cb6">=</text>
<text x="294.8" y="633" font-size="12.1" text-anchor="middle" textLength="7.85" lengthAdjust="spacingAndGlyphs" fill="#7c7cb6">=</text>
<text x="351.8" y="633" font-size="12.1" text-anchor="middle" textLength="7.85" lengthAdjust="spacingAndGlyphs" fill="#7c7cb6">=</text>
<text x="408.8" y="633" font-size="12.1" text-anchor="middle" textLength="7.85" lengthAdjust="spacingAndGlyphs" fill="#7c7cb6">=</text>
<text x="464.8" y="633" font-size="12.1" text-anchor="middle" textLength="7.85" lengthAdjust="spacingAndGlyphs" fill="#7c7cb6">=</text>
<text x="521.8" y="633" font-size="12.1" text-anchor="middle" textLength="7.85" lengthAdjust="spacingAndGlyphs" fill="#7c7cb6">=</text>
<text x="578.8" y="633" font-size="12.1" text-anchor="middle" textLength="7.85" lengthAdjust="spacingAndGlyphs" fill="#7c7cb6">=</text>
<text x="634.8" y="633" font-size="12.1" text-anchor="middle" textLength="7.85" lengthAdjust="spacingAndGlyphs" fill="#7c7cb6">=</text>
<text x="691.8" y="633" font-size="12.1" text-anchor="middle" textLength="7.85" lengthAdjust="spacingAndGlyphs" fill="#7c7cb6">=</text>
<text x="748.8" y="633" font-size="12.1" text-anchor="middle" textLength="7.85" lengthAdjust="spacingAndGlyphs" fill="#7c7cb6">=</text>
<text x="804.8" y="633" font-size="12.1" text-anchor="middle" textLength="7.85" lengthAdjust="spacingAndGlyphs" fill="#7c7cb6">=</text>
<text x="861.8" y="633" font-size="12.1" text-anchor="middle" textLength="7.85" lengthAdjust="spacingAndGlyphs" fill="#7c7cb6">=</text>
<text x="918.8" y="633" font-size="12.1" text-anchor="middle" textLength="7.85" lengthAdjust="spacingAndGlyphs" fill="#7c7cb6">=</text>
<text x="441 450 457 464 471 478 482 485 492 499 503 512 515 522 533 540 547 551 558 562 569 576 580 589 596 603 610 617 621 632 639 646 653 660" y="648" font-size="13">Repeating Elements by RepeatMasker</text>
<text x="68 77 84 91 98 105 109 120 127 134 141 148" y="662" font-size="13">RepeatMasker</text>
<defs><filter id="vth" x="-5%" y="-100%" width="110%" height="300%" color-interpolation-filters="sRGB"><feGaussianBlur stdDeviation="0 0.45"/><feComponentTransfer><feFuncA type="linear" slope="1.6" intercept="0"/></feComponentTransfer></filter></defs>
<g filter="url(#vth)"><text transform="matrix(0.6506 0 0 0.0438 215.50 460.26)" x="0" y="0" font-size="100" fill="#a0a000" fill-opacity="1.0">C</text></g>
<text transform="matrix(0.6109 0 0 0.0625 274.38 464.30)" x="0" y="0" font-size="100" fill="#ff0000" fill-opacity="1.0">A</text>
<g filter="url(#vth)"><text transform="matrix(0.6379 0 0 0.0537 328.86 463.75)" x="0" y="0" font-size="100" fill="#a0a000" fill-opacity="1.0">C</text></g>
<text transform="matrix(0.6668 0 0 0.0451 385.50 463.00)" x="0" y="0" font-size="100" fill="#00ff00" fill-opacity="0.55">T</text>
<rect x="403" y="460" width="6" height="3" fill="#00ff00"/>
<g filter="url(#vth)"><text transform="matrix(0.6395 0 0 0.0537 442.75 463.75)" x="0" y="0" font-size="100" fill="#a0a000" fill-opacity="1.0">C</text></g>
<text transform="matrix(0.6686 0 0 0.0174 442.70 465.00)" x="0" y="0" font-size="100" fill="#00ff00" fill-opacity="0.3">T</text>
<rect x="460" y="464" width="6" height="1" fill="#00ff00"/>
<g filter="url(#vth)"><text transform="matrix(0.6348 0 0 0.0438 555.78 460.26)" x="0" y="0" font-size="100" fill="#a0a000" fill-opacity="1.0">C</text></g>
<text transform="matrix(0.6650 0 0 0.0436 838.60 460.00)" x="0" y="0" font-size="100" fill="#00ff00" fill-opacity="0.55">T</text>
<rect x="856" y="457" width="6" height="3" fill="#00ff00"/>
<text transform="matrix(0.6094 0 0 0.0770 897.48 465.30)" x="0" y="0" font-size="100" fill="#ff0000" fill-opacity="1.0">A</text>
<text transform="matrix(0.6474 0 0 0.0127 895.71 465.89)" x="0" y="0" font-size="100" fill="#a0a000" fill-opacity="0.45">C</text>
<rect x="156" y="253" width="793" height="15" fill="#bebebe"/>
<rect x="156" y="316" width="378" height="53" fill="#ffffff"/>
<rect x="156" y="316" width="378" height="1" fill="#f4f4f4"/>
<rect x="533" y="316" width="1" height="52" fill="#f4f4f4"/>
<rect x="156" y="320" width="5" height="48" fill="#ffa54f"/>
<rect x="163" y="322" width="5" height="46" fill="#ee9a00"/>
<rect x="170" y="326" width="5" height="42" fill="#8fbc8f"/>
<rect x="177" y="320" width="5" height="48" fill="#8b1c62"/>
<rect x="184" y="321" width="5" height="47" fill="#ee6a50"/>
<rect x="191" y="319" width="5" height="49" fill="#ff0000"/>
<rect x="198" y="318" width="5" height="50" fill="#cdb79e"/>
<rect x="205" y="329" width="5" height="39" fill="#eeee00"/>
<rect x="212" y="326" width="5" height="42" fill="#eeee00"/>
<rect x="219" y="325" width="5" height="43" fill="#eeee00"/>
<rect x="226" y="322" width="5" height="46" fill="#eeee00"/>
<rect x="233" y="322" width="5" height="46" fill="#eeee00"/>
<rect x="240" y="324" width="5" height="44" fill="#eeee00"/>
<rect x="247" y="324" width="5" height="44" fill="#eeee00"/>
<rect x="254" y="331" width="5" height="37" fill="#eeee00"/>
<rect x="261" y="326" width="5" height="42" fill="#eeee00"/>
<rect x="268" y="324" width="5" height="44" fill="#eeee00"/>
<rect x="275" y="328" width="5" height="40" fill="#eeee00"/>
<rect x="282" y="328" width="5" height="40" fill="#eeee00"/>
<rect x="289" y="328" width="5" height="40" fill="#eeee00"/>
<rect x="296" y="321" width="5" height="47" fill="#00cdcd"/>
<rect x="303" y="320" width="5" height="48" fill="#ee82ee"/>
<rect x="310" y="318" width="5" height="50" fill="#9ac0cd"/>
<rect x="317" y="318" width="5" height="50" fill="#eed5d2"/>
<rect x="324" y="317" width="5" height="51" fill="#eed5d2"/>
<rect x="331" y="319" width="5" height="49" fill="#cdb79e"/>
<rect x="338" y="321" width="5" height="47" fill="#eec591"/>
<rect x="345" y="319" width="5" height="49" fill="#8b7355"/>
<rect x="352" y="320" width="5" height="48" fill="#8b7355"/>
<rect x="359" y="319" width="5" height="49" fill="#cdaa7d"/>
<rect x="366" y="319" width="5" height="49" fill="#eed5d2"/>
<rect x="373" y="323" width="5" height="45" fill="#b452cd"/>
<rect x="380" y="324" width="5" height="44" fill="#7a378b"/>
<rect x="387" y="321" width="5" height="47" fill="#cdb79e"/>
<rect x="394" y="319" width="5" height="49" fill="#cdb79e"/>
<rect x="401" y="331" width="5" height="37" fill="#cdb79e"/>
<rect x="408" y="321" width="5" height="47" fill="#9acd32"/>
<rect x="415" y="323" width="5" height="45" fill="#cdb79e"/>
<rect x="422" y="318" width="5" height="50" fill="#7a67ee"/>
<rect x="429" y="320" width="5" height="48" fill="#ffd700"/>
<rect x="436" y="318" width="5" height="50" fill="#ffb6c1"/>
<rect x="443" y="331" width="5" height="37" fill="#cd9b1d"/>
<rect x="450" y="320" width="5" height="48" fill="#b4eeb4"/>
<rect x="457" y="319" width="5" height="49" fill="#d9d9d9"/>
<rect x="464" y="320" width="5" height="48" fill="#3a5fcd"/>
<rect x="471" y="319" width="5" height="49" fill="#1e90ff"/>
<rect x="478" y="324" width="5" height="44" fill="#cdb79e"/>
<rect x="485" y="326" width="5" height="42" fill="#cdb79e"/>
<rect x="492" y="323" width="5" height="45" fill="#ffd39b"/>
<rect x="499" y="316" width="5" height="52" fill="#a6a6a6"/>
<rect x="506" y="320" width="5" height="48" fill="#008b45"/>
<rect x="513" y="317" width="5" height="51" fill="#eed5d2"/>
<rect x="520" y="319" width="5" height="49" fill="#eed5d2"/>
<rect x="527" y="338" width="5" height="30" fill="#ff00ff"/>
<rect x="156" y="369" width="793" height="2" fill="#000078"/>
</svg>
</body></html>
